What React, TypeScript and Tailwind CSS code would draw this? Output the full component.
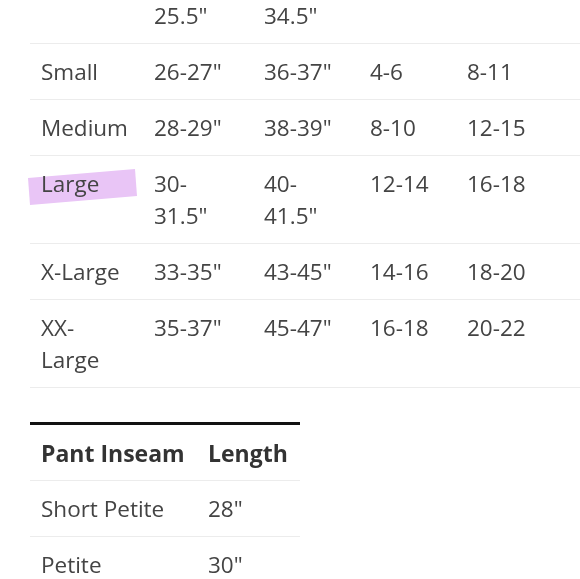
import React from "react";

const sizeRows = [
  ["Small", "26-27\"", "36-37\"", "4-6", "8-11"],
  ["Medium", "28-29\"", "38-39\"", "8-10", "12-15"],
  ["Large", "30-31.5\"", "40-41.5\"", "12-14", "16-18"],
  ["X-Large", "33-35\"", "43-45\"", "14-16", "18-20"],
  ["XX-Large", "35-37\"", "45-47\"", "16-18", "20-22"],
];

const inseamRows = [
  ["Short Petite", "28\""],
  ["Petite", "30\""],
];

const cols = "grid grid-cols-[113px_110px_106px_97px_1fr] border-b border-[#ececec]";

// break "30-31.5"" after the dash the way the narrow column wraps it
function wrapDash(text: string) {
  const i = text.indexOf("-");
  return (
    <>
      {text.slice(0, i + 1)}
      <br />
      {text.slice(i + 1)}
    </>
  );
}

function Highlight() {
  return (
    <svg
      className="absolute left-[-2px] top-[13px] pointer-events-none mix-blend-multiply"
      width="110"
      height="37"
      viewBox="0 0 110 37"
    >
      <polygon points="0,9 107,0 109,27 2,36" fill="#e9c5f6" />
    </svg>
  );
}

export default function App() {
  return (
    <div
      className="w-[580px] h-[579px] overflow-hidden bg-white text-[#444] text-[22.5px] leading-8"
      style={{ fontFamily: '"Open Sans", "Noto Sans", sans-serif' }}
    >
      <div className="ml-[30px]">
        {/* tail of the row scrolled off above */}
        <div className={cols}>
          <div className="pl-[11px] pb-[11px]"></div>
          <div className="pl-[11px] pb-[11px]">25.5"</div>
          <div className="pl-[11px] pb-[11px]">34.5"</div>
          <div></div>
          <div></div>
        </div>
        {sizeRows.map((row, r) => (
          <div key={r} className={cols}>
            {row.map((cell, c) => (
              <div key={c} className="relative pl-[11px] pt-3 pb-[11px]">
                {r === 2 && c === 0 && <Highlight />}
                {c === 0 && r === 4 ? (
                  <>
                    XX-
                    <br />
                    Large
                  </>
                ) : r === 2 && (c === 1 || c === 2) ? (
                  wrapDash(cell)
                ) : (
                  <span className="relative">{cell}</span>
                )}
              </div>
            ))}
          </div>
        ))}
      </div>

      <div className="ml-[30px] mt-[34px] w-[270px] border-t-[3px] border-[#111]">
        <div className="grid grid-cols-[167px_1fr] border-b border-[#ececec] font-bold text-[23px] text-[#333]">
          <div className="pl-[11px] pt-3 pb-[11px]">Pant Inseam</div>
          <div className="pl-[11px] pt-3 pb-[11px]">Length</div>
        </div>
        {inseamRows.map((row, r) => (
          <div key={r} className="grid grid-cols-[167px_1fr] border-b border-[#ececec]">
            <div className="pl-[11px] pt-3 pb-[11px]">{row[0]}</div>
            <div className="pl-[11px] pt-3 pb-[11px]">{row[1]}</div>
          </div>
        ))}
      </div>
    </div>
  );
}
